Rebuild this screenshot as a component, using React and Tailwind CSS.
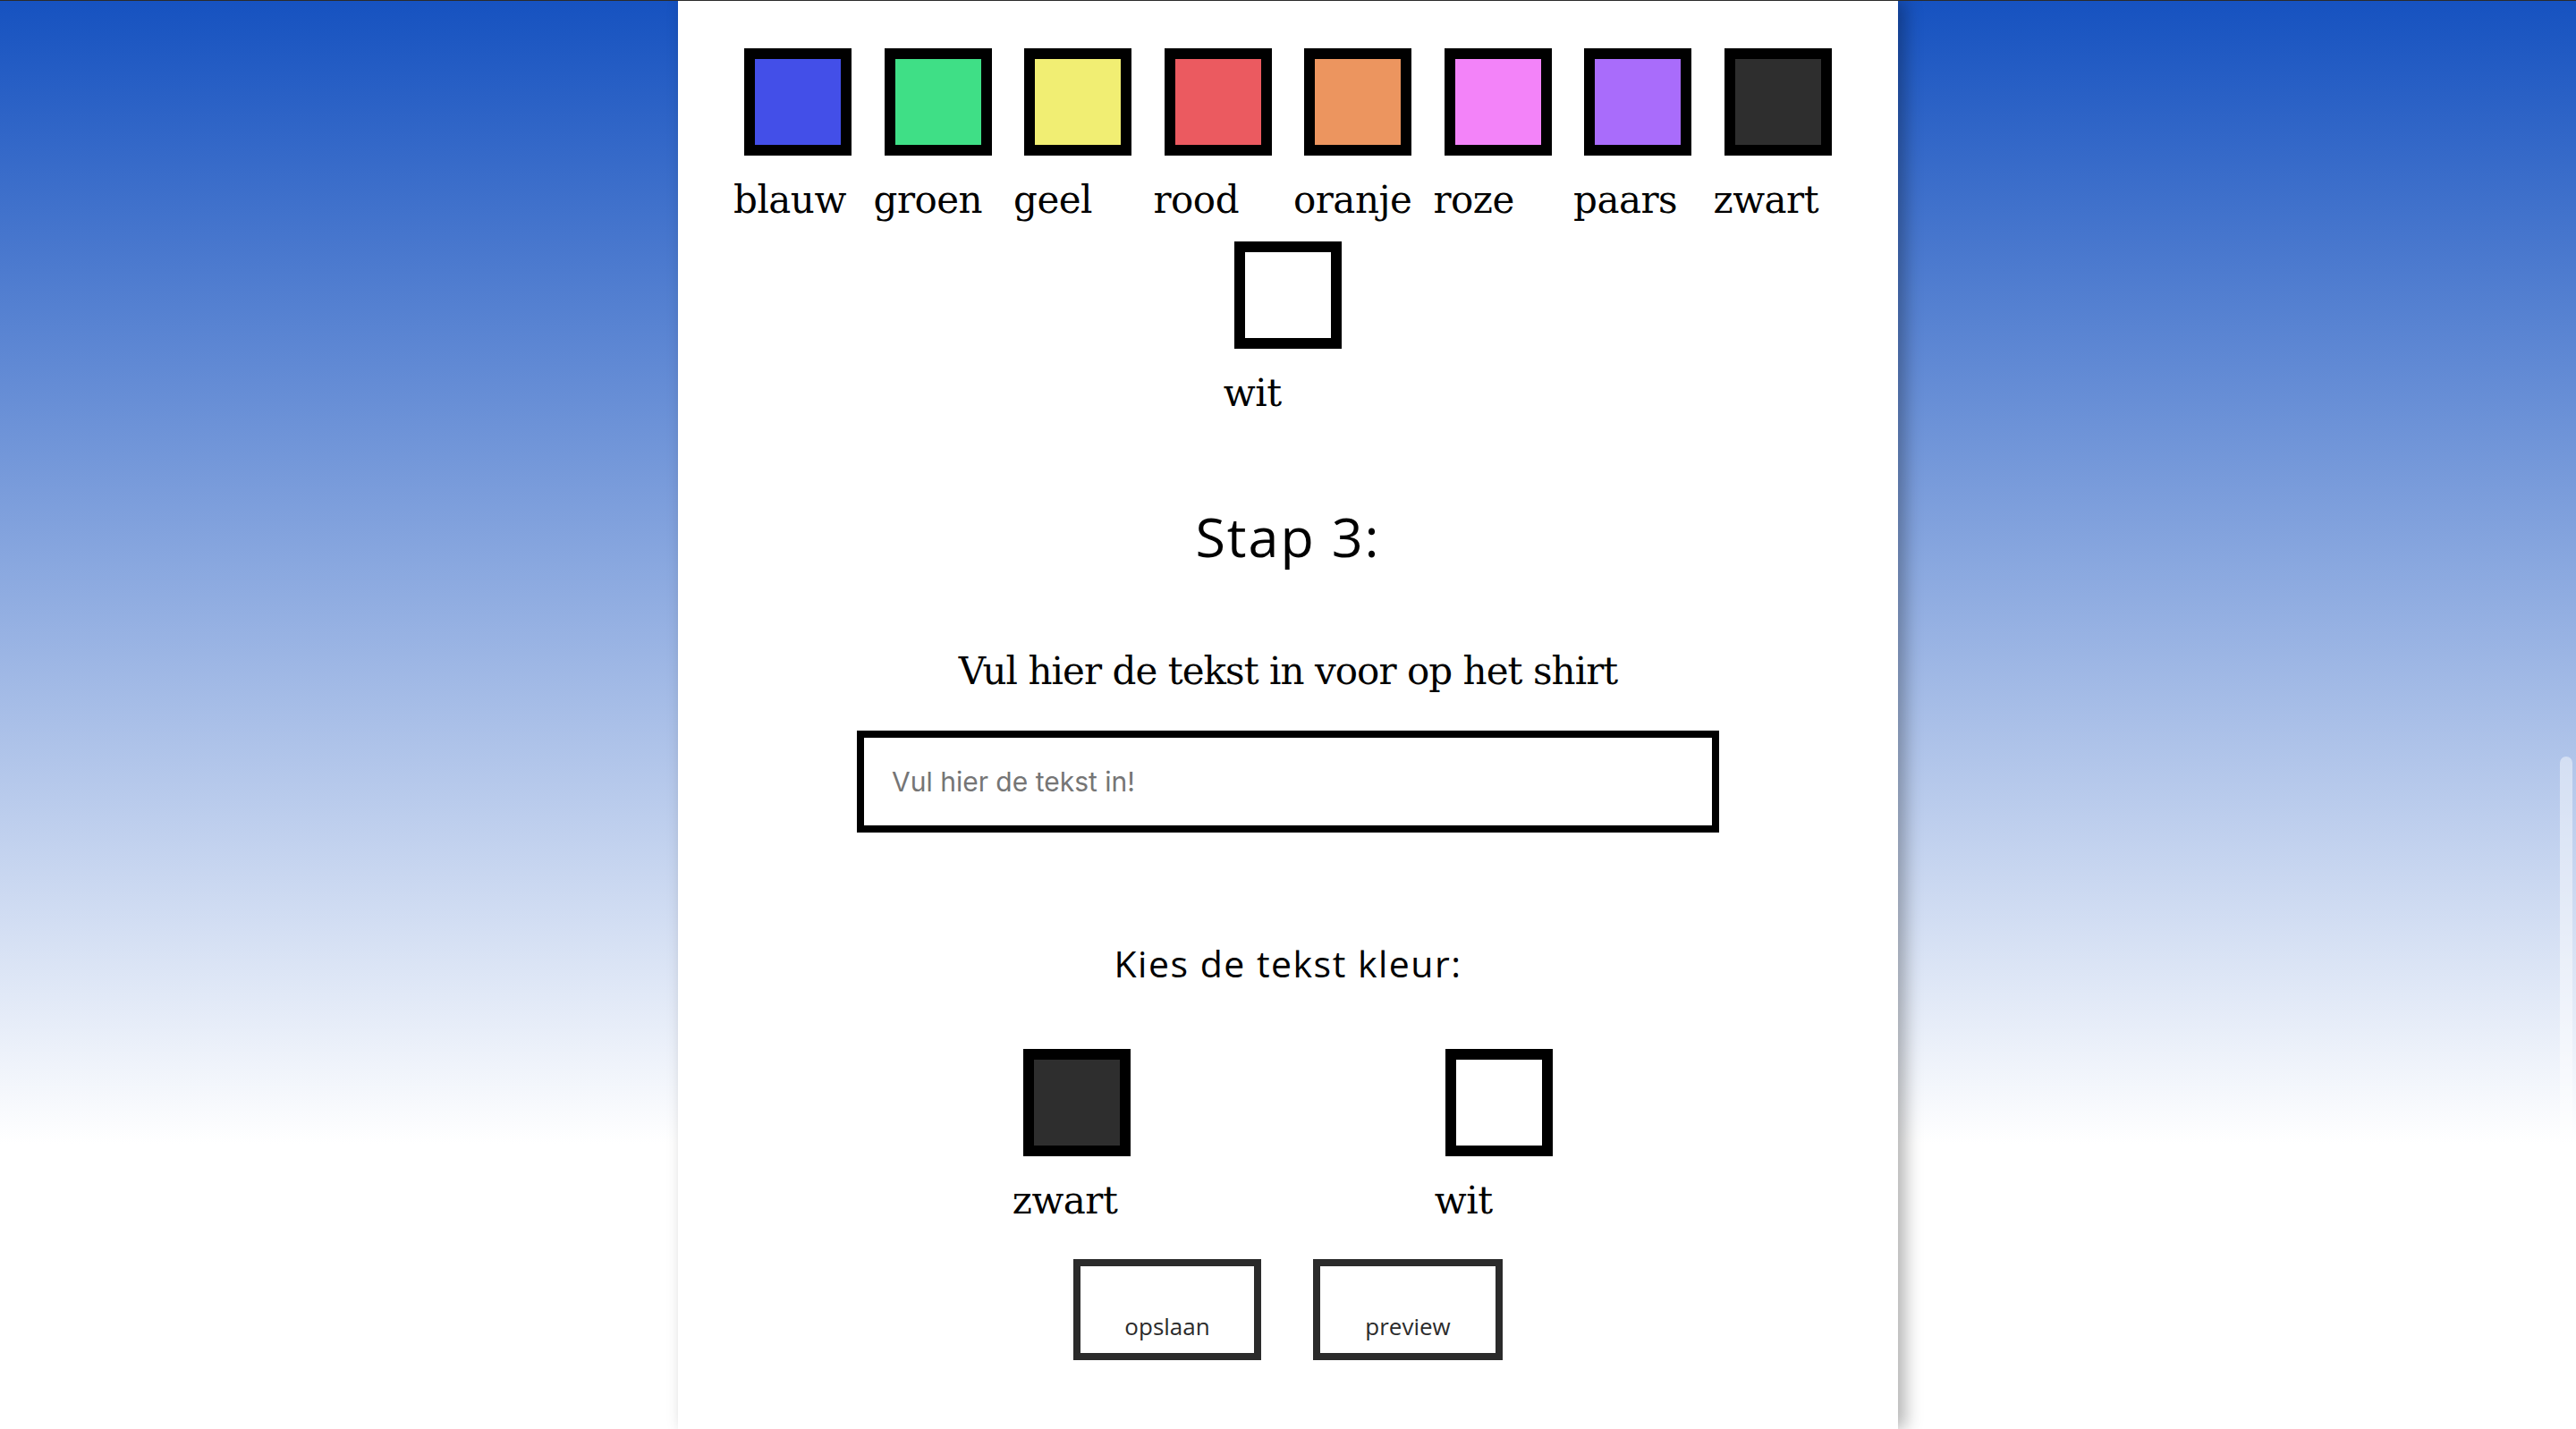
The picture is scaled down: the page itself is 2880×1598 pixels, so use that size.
import React from 'react';

const shirtColors = [
  { name: 'blauw', color: 'bg-[#434fe8]' },
  { name: 'groen', color: 'bg-[#3fdf86]' },
  { name: 'geel', color: 'bg-[#f1ee73]' },
  { name: 'rood', color: 'bg-[#eb5a60]' },
  { name: 'oranje', color: 'bg-[#ec955f]' },
  { name: 'roze', color: 'bg-[#f383f9]' },
  { name: 'paars', color: 'bg-[#a96cfb]' },
  { name: 'zwart', color: 'bg-[#2e2e2e]' },
  { name: 'wit', color: 'bg-white' },
];

const textColors = [
  { name: 'zwart', color: 'bg-[#2e2e2e]' },
  { name: 'wit', color: 'bg-white' },
];

const serif = "font-['DejaVu_Serif',serif] tracking-[-0.5px]";
const sans = "font-['Open_Sans',sans-serif]";

const Swatch = ({ name, color }) => (
  <div className="w-[156.5px] px-[6px] pb-[22px]">
    <div className={`ml-[12px] w-[120px] h-[120px] border-[12px] border-black ${color}`} />
    <div className={`mt-[26px] text-[42px] leading-[48px] text-black ${serif}`}>{name}</div>
  </div>
);

const App = () => {
  return (
    <div className="relative h-[1598px] w-full overflow-hidden border-t border-[#2b2b2b] bg-[linear-gradient(to_bottom,#1652c0_0%,#ffffff_80%)]">
      <div className="mx-auto flex h-full w-[1364px] flex-col items-center bg-white pt-[53px] shadow-[8px_0_18px_rgba(0,0,0,0.3)]">
        {/* Stap 2: shirt kleur */}
        <div className="flex flex-wrap justify-center w-[1300px]">
          {shirtColors.map((c) => (
            <Swatch key={c.name} {...c} />
          ))}
        </div>

        {/* Stap 3 */}
        <h2 className={`mt-[78px] text-[61px] leading-[72px] tracking-[2px] text-black ${sans}`}>Stap 3:</h2>
        <p className="mt-[91px] text-[42px] leading-[48px] text-black font-['DejaVu_Serif',serif] tracking-[-0.95px]">
          Vul hier de tekst in voor op het shirt
        </p>
        <input
          type="text"
          placeholder="Vul hier de tekst in!"
          className="mt-[42px] h-[114px] w-[964px] border-[8px] border-black bg-white pl-[31px] text-[30px] text-black outline-none placeholder:text-[#757575] font-['Inter',sans-serif]"
        />

        <p className={`mt-[122px] text-[41px] leading-[48px] tracking-[1.5px] text-black ${sans}`}>Kies de tekst kleur:</p>
        <div className="mt-[72px] flex justify-center gap-[315.5px]">
          {textColors.map((c) => (
            <Swatch key={c.name} {...c} />
          ))}
        </div>

        <div className="mt-[19px] flex gap-[58px]">
          <button className={`flex h-[113px] w-[210px] items-end justify-center border-[8px] border-[#2b2b2b] bg-white pb-[14px] text-[26px] leading-[31px] text-[#2b2b2b] ${sans}`}>
            opslaan
          </button>
          <button className={`flex h-[113px] w-[212px] items-end justify-center border-[8px] border-[#2b2b2b] bg-white pb-[14px] text-[26px] leading-[31px] text-[#2b2b2b] ${sans}`}>
            preview
          </button>
        </div>
      </div>

      {/* scrollbar thumb */}
      <div className="absolute right-[4px] top-[845px] h-[760px] w-[14px] rounded-full bg-white/45" />
    </div>
  );
};

export default App;
